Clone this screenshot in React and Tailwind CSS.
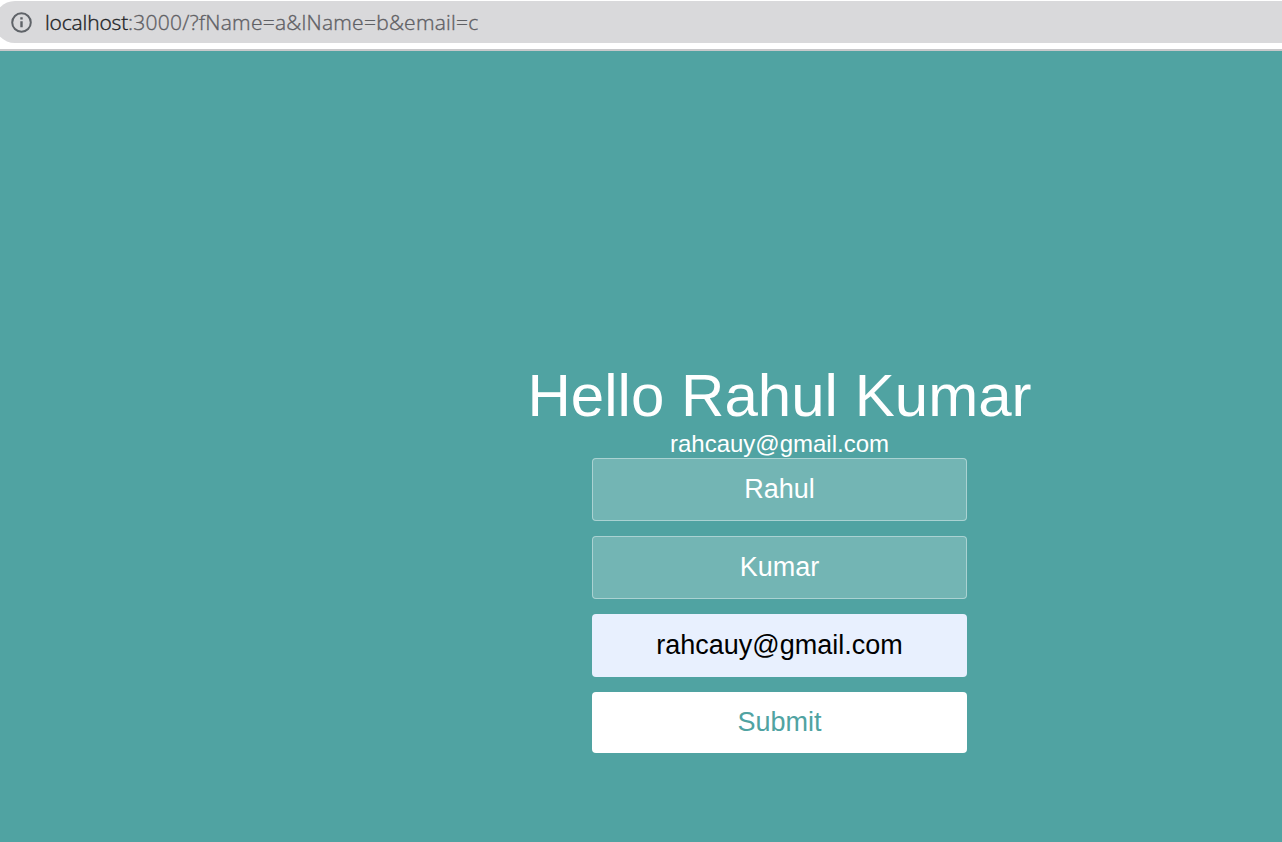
const field = "block h-[63px] w-full rounded border border-white/40 bg-white/20 px-4 pb-px text-center text-[27px] font-normal text-white outline-none";

function AddressBar() {
  return (
    <header className="h-[51px] border-b-2 border-[#c8c8ca] bg-white pt-px">
      <div className="-ml-[6px] flex h-[42px] items-center rounded-l-full bg-[#d9d9db] pl-[17px] font-['Open_Sans','Noto_Sans',sans-serif] text-[21px] font-light tracking-[0.25px] text-[#5f6064] [-webkit-text-stroke:0.35px_currentColor]">
        <svg className="mr-[13px] size-[21px]" viewBox="0 0 21 21" fill="none" stroke="#5f6368" strokeWidth="2">
          <circle cx="10.5" cy="10.5" r="9.3" />
          <path d="M10.5 9.3v6M10.5 5.3v2.2" strokeWidth="2.4" />
        </svg>
        <span className="whitespace-nowrap pt-px">
          <span className="tracking-[-0.15px] text-[#202124]">localhost</span>:3000/?fName=a&lName=b&email=c
        </span>
      </div>
    </header>
  );
}

export default function App() {
  return (
    <div className="flex h-[842px] w-[1282px] flex-col overflow-hidden bg-[#50a3a2] font-['Liberation_Sans',Arial,sans-serif] text-white">
      <AddressBar />
      <main className="ml-[492px] flex w-[575px] flex-col items-center pt-[309px]">
        <h1 className="text-[60px] leading-[72px] tracking-[0.04px] whitespace-nowrap">Hello Rahul Kumar</h1>
        <p className="h-[26px] text-[24px] leading-[23px]">rahcauy@gmail.com</p>
        <form className="flex w-[375px] flex-col gap-[15px]" onSubmit={(e) => e.preventDefault()}>
          <input className={field} aria-label="First name" defaultValue="Rahul" />
          <input className={field} aria-label="Last name" defaultValue="Kumar" />
          <input className="block h-[63px] w-full rounded bg-[#e8f0fe] px-4 pb-px text-center text-[27px] text-black outline-none" aria-label="Email" defaultValue="rahcauy@gmail.com" />
          <button className="h-[61px] w-full rounded bg-white pb-px text-[27px] text-[#50a3a2]">Submit</button>
        </form>
      </main>
    </div>
  );
}
